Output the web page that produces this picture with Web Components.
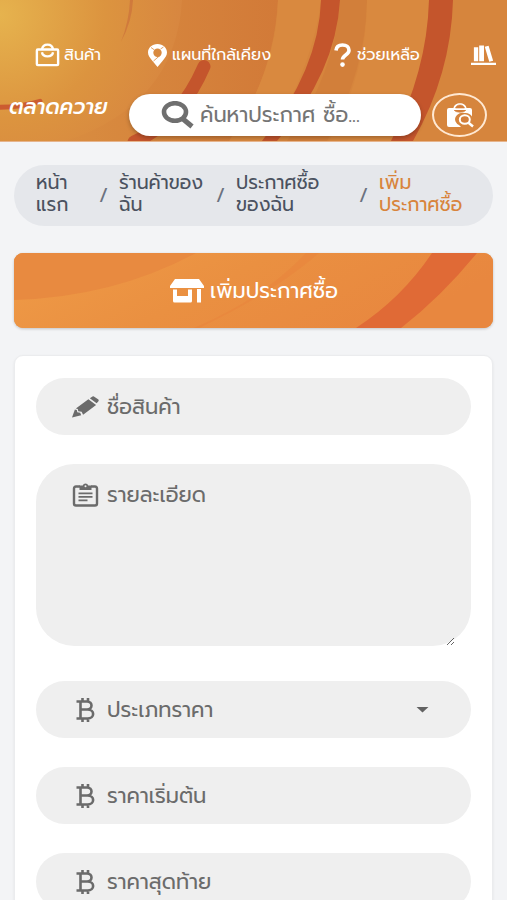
<!DOCTYPE html>
<html lang="th">
<head>
<meta charset="utf-8">
<meta name="viewport" content="width=device-width, initial-scale=1">
<title>เพิ่มประกาศซื้อ</title>
<style>
  html { background: #f3f4f6; }
  body { margin: 0; color: #4b5260; font: 18px/22px "Prompt", "Noto Sans", "Noto Sans Thai", sans-serif; }
  main { display: grid; gap: 27px; padding: 23px 14px; }
</style>
</head>
<body>
<site-header>
  <nav-item slot="nav" icon="bag">สินค้า</nav-item>
  <nav-item slot="nav" icon="pin">แผนที่ใกล้เคียง</nav-item>
  <nav-item slot="nav" icon="help">ช่วยเหลือ</nav-item>
  <nav-item slot="nav" icon="books" label="คลังความรู้"></nav-item>
  <search-box slot="search" placeholder="ค้นหาประกาศ ซื้อ..."></search-box>
</site-header>
<main>
  <crumb-trail>
    <crumb-item>หน้า<br>แรก</crumb-item>
    <crumb-item>ร้านค้าของ<br>ฉัน</crumb-item>
    <crumb-item>ประกาศซื้อ<br>ของฉัน</crumb-item>
    <crumb-item current>เพิ่ม<br>ประกาศซื้อ</crumb-item>
  </crumb-trail>
  <action-banner>เพิ่มประกาศซื้อ</action-banner>
  <form-card>
    <form-field icon="pencil" label="ชื่อสินค้า"></form-field>
    <form-field icon="clipboard" kind="textarea" label="รายละเอียด"></form-field>
    <form-field icon="baht" kind="select" label="ประเภทราคา"></form-field>
    <form-field icon="baht" label="ราคาเริ่มต้น"></form-field>
    <form-field icon="baht" label="ราคาสุดท้าย"></form-field>
  </form-card>
</main>
<script>
const ICONS = {
  bag: ['0 0 26 26', '<g fill="none" stroke="currentColor" stroke-width="2.6" stroke-linejoin="round"><rect x="1.5" y="7" width="23" height="17" rx="1"/><path d="M7 7c1-7 11-7 12 0"/><path d="M7 10c1 6 11 6 12 0"/></g>'],
  pin: ['0 0 20 24', '<path fill="currentColor" fill-rule="evenodd" d="M10 1C4.500 1 .5 4.700.5 9.500c0 3 2 5.500 4.500 8.500l5 6 5-6c2.500-3 4.500-5.500 4.500-8.500C19.500 4.700 15.500 1 10 1zm0 4.500a4.200 4.200 0 1 1 0 8.400 4.200 4.200 0 0 1 0-8.400z"/><path d="M3.500 4.500 7 7M13 12l-7 6M13 6l3-2" stroke="#d98a40" stroke-width=".8"/>'],
  help: ['0 0 18 24', '<path d="M2.500 7.500C2.800 3.500 5.500 2 9 2c4 0 6.500 2 6.500 5.200 0 4.800-6.500 4.600-6.500 9.300" fill="none" stroke="currentColor" stroke-width="3.600"/><circle cx="9" cy="21.600" r="2.300" fill="currentColor"/>'],
  books: ['0 0 26 22', '<path fill="currentColor" d="M0 19h26v2.500H0zM3 3h4.500v14.500H3zM8.500 1h5v16.500h-5zM14.300 2.500l4-1 4.700 15.500-4 1z"/>'],
  search: ['0 0 34 28', '<ellipse cx="14" cy="11" rx="11" ry="8.800" fill="none" stroke="currentColor" stroke-width="4.600"/><path d="m22 18 9 7.500" stroke="currentColor" stroke-width="5"/>'],
  bagsearch: ['0 0 28 26', '<path fill="currentColor" d="M3 6h4.500C8 -.5 20 -.5 20.500 6H24a2 2 0 0 1 2 2v6.500A7.500 6.500 0 0 0 18.500 11a7.500 6.500 0 0 0-5.500 12l2 2H3a2 2 0 0 1-2-2V8a2 2 0 0 1 2-2z"/><path d="M9.500 6c1-4 8-4 9 0zM8 8c2 3 10 3 12 0" fill="#d47f3b" stroke="#d47f3b" stroke-width=".6"/><ellipse cx="18.800" cy="17.500" rx="5" ry="4.300" fill="#d47f3b" stroke="currentColor" stroke-width="2"/><path d="m22.500 20.800 4.500 3.700" stroke="currentColor" stroke-width="2.500"/>'],
  shop: ['0 0 36 24', '<path fill="currentColor" d="M6 0h24l5 7v2H1V7zM4 10.500h4V17h11v-6.500h4V22a1.500 1.500 0 0 1-1.500 1.500h-16A1.500 1.500 0 0 1 4 22zM28 10h4v13.500h-4z"/>'],
  pencil: ['0 0 28 22', '<path fill="currentColor" d="M0 22l3-8.500L5 14l.5 2.500 3 .5 1 2.500zM4 12.500 17 3l8 6L11.500 19l-1.500-3-3.500-.5L6 13zM18.500 2l2-1.500c1-.7 2-.7 3 0L27 3c1 .8 1 1.700 0 2.600L25.500 7z"/>'],
  clipboard: ['0 0 26 24', '<path d="M7.500 3.500h-4Q1.500 3.500 1.500 5.500v15q0 2 2 2h19q2 0 2-2v-15q0-2-2-2h-4" fill="none" stroke="currentColor" stroke-width="2.400"/><path fill="currentColor" d="M7 2.500h3.200a3 3 0 0 1 5.600 0H19V7H7zM6 9.500h14v1.800H6zM6 13h14v1.800H6zM6 16.500h9v1.800H6z"/><circle cx="13" cy="3.300" r="1" fill="#efefef"/>'],
  baht: ['0 0 20 24', '<path d="M1 3.500h10.500c6 0 6 8 0 8H5h7c7.500 0 7.500 9 0 9H1M5 3.500v17M7 0v4M12.500 0v4M7 20v4M12.500 20v4" fill="none" stroke="currentColor" stroke-width="2.600"/>']
};

function define(name, render) {
  customElements.define(name, class extends HTMLElement {
    constructor() { super(); this.attachShadow({ mode: 'open' }); }
    connectedCallback() { this.shadowRoot.innerHTML = render(this); }
  });
}

define('ui-icon', el => {
  const [box, body] = ICONS[el.getAttribute('name')];
  return `<style>:host{display:block;flex:none}svg{display:block;width:100%;height:100%}</style>
  <svg viewBox="${box}" aria-hidden="true">${body}</svg>`;
});

define('nav-item', el => `
<style>
  :host { display: block; }
  a { display: flex; align-items: center; gap: 4px; color: #fff; text-decoration: none; font-size: 16px; line-height: 24px; white-space: nowrap; }
  ui-icon { width: 25px; height: 24px; }
  ui-icon[name=pin], ui-icon[name=help] { width: 21px; }
</style>
<a href="#" ${el.getAttribute('label') ? `aria-label="${el.getAttribute('label')}"` : ''}><ui-icon name="${el.getAttribute('icon')}"></ui-icon><slot></slot></a>`);

define('search-box', el => `
<style>
  :host { display: block; flex: 1; min-width: 0; }
  label { display: flex; align-items: center; gap: 5px; height: 42px; padding: 0 32px; box-sizing: border-box; border-radius: 21px; background: #fff; color: #6f6f6f; box-shadow: 0 2px 4px #0004; }
  ui-icon { width: 34px; height: 28px; }
  input { flex: 1; width: 0; min-width: 0; padding: 0; border: 0; outline: 0; background: none; color: inherit; font: inherit; font-size: 21px; line-height: 32px; }
  input::placeholder { color: #757575; opacity: 1; }
</style>
<label><ui-icon name="search"></ui-icon><input type="text" aria-label="${el.getAttribute('placeholder')}" placeholder="${el.getAttribute('placeholder')}"></label>`);

define('site-header', () => `
<style>
  :host { display: grid; position: relative; overflow: hidden; color: #fff; background: #d6833d; padding: 43px 0 4px; gap: 26px; border-bottom: 1px solid #e6b48c; }
  .art { position: absolute; inset: 0; width: 100%; height: 100%; }
  nav { position: relative; display: flex; gap: 40px; padding-left: 35px; overflow: hidden; }
  ::slotted(nav-item) { flex: 0 0 72px; }
  ::slotted(nav-item:nth-of-type(2)) { flex-basis: 145px; }
  ::slotted(nav-item:nth-of-type(3)) { flex-basis: 99px; }
  .bar { position: relative; display: flex; align-items: center; padding: 0 20px 0 9px; }
  .logo { flex: none; width: 120px; color: #fff; text-decoration: none; font-size: 21px; font-weight: 500; font-style: italic; line-height: 24px; padding-bottom: 16px; white-space: nowrap; }
  button { flex: none; display: grid; place-items: center; width: 55px; height: 44px; margin-left: 11px; padding: 0; border: 2px solid #ffe8d2; border-radius: 50%; background: none; color: #fff; }
  button ui-icon { width: 28px; height: 26px; }
</style>
<svg class="art" viewBox="0 0 507 142" preserveAspectRatio="none" aria-hidden="true">
  <defs>
    <radialGradient id="sun" gradientUnits="userSpaceOnUse" cx="0" cy="15" r="190"><stop stop-color="#e6b34e"/><stop offset=".55" stop-color="#dc943f"/><stop offset="1" stop-color="#d78540"/></radialGradient>
    <linearGradient id="mid" x1="0" x2="1"><stop stop-color="#d98d40"/><stop offset="1" stop-color="#d27a38"/></linearGradient>
  </defs>
  <path fill="#d6853d" d="M0 0h507v142H0z"/>
  <path fill="url(#mid)" d="M180 0h98q-4 76-48 142H60q120-50 120-142z"/>
  <path fill="url(#sun)" d="M0 0h182Q176 105 66 142H0z"/>
  <path fill="#d07a3c" d="M130 0h3q-1 22-12 42 8-20 9-42z"/>
  <path fill="#d9893f" d="M278 0h43q-6 60-52 142h-40Q276 72 278 0z"/>
  <path fill="#d27f3a" d="M340 0h27q-1 70-40 142h-40q48-66 53-142z"/>
  <path fill="#d9893f" d="M367 0h62q-1 80-38 142h-62q38-70 38-142z"/>
  <path fill="#c4552c" d="M321 0h19q-4 73-63 142h-15Q319 70 321 0zM429 0h24q-2 75-40 142h-22q36-70 38-142z"/>
  <path d="M204 67q-24 56-70 76" fill="none" stroke="#c4552c" stroke-width="13" stroke-linecap="round"/>
  <path d="M-2 108q22 0 42-6" fill="none" stroke="#cc5c30" stroke-width="5" stroke-linecap="round"/>
</svg>
<nav aria-label="เมนูหลัก"><slot name="nav"></slot></nav>
<div class="bar"><a class="logo" href="#">ตลาดควาย</a><slot name="search"></slot><button type="button" aria-label="ค้นหาสินค้า"><ui-icon name="bagsearch"></ui-icon></button></div>`);

define('crumb-trail', () => `
<style>
  :host { display: block; }
  nav { display: flex; align-items: center; min-height: 61px; box-sizing: border-box; padding: 6px 28px 6px 22px; border-radius: 31px; background: #e5e7eb; }
</style>
<nav aria-label="เส้นทาง"><slot></slot></nav>`);

define('crumb-item', () => `
<style>
  :host { display: flex; align-items: center; flex: 0 1 117px; font-size: 19px; line-height: 22px; color: #4b5260; white-space: nowrap; }
  :host(:first-child) { flex-basis: 83px; }
  :host(:nth-child(3)) { flex-basis: 143px; }
  :host([current]) { color: #d8843c; flex: 1; }
  a { flex: 1; padding-bottom: 4px; color: inherit; text-decoration: none; }
  i { flex: none; width: 20px; font-style: normal; color: #6b7280; }
  :host([current]) i { display: none; }
</style>
<a href="#"><slot></slot></a><i aria-hidden="true">/</i>`);

define('action-banner', () => `
<style>
  :host { display: block; }
  button { position: relative; display: flex; align-items: center; justify-content: center; gap: 5px; width: 100%; min-height: 75px; padding: 0; border: 0; border-radius: 9px; overflow: hidden; background: #e98f42; color: #fff; font: inherit; font-size: 21px; line-height: 32px; box-shadow: 0 1px 3px #0003; }
  .art { position: absolute; inset: 0; width: 100%; height: 100%; }
  ui-icon { position: relative; width: 36px; height: 24px; }
  span { position: relative; }
</style>
<button type="button">
  <svg class="art" viewBox="0 0 479 75" preserveAspectRatio="none" aria-hidden="true">
    <defs><linearGradient id="g" x1="0" x2="1" y2=".3"><stop stop-color="#ef9b47"/><stop offset=".5" stop-color="#ea9041"/><stop offset="1" stop-color="#e8873f"/></linearGradient></defs>
    <path fill="url(#g)" d="M0 0h479v75H0z"/>
    <path fill="#e88a40" d="M0 0h182Q100 44 0 47z"/>
    <path fill="#e8873d" d="M292 0h13q-46 40-120 75h-5q70-30 112-75z" opacity=".8"/>
    <path fill="#e06a36" d="M418 0h45q-36 44-76 75h-45q46-30 76-75z"/>
  </svg>
  <ui-icon name="shop"></ui-icon><span><slot></slot></span>
</button>`);

define('form-card', () => `
<style>
  :host { display: block; }
  form { display: grid; gap: 29px; padding: 22px 21px; border: 1px solid #ebecee; border-radius: 9px; background: #fff; box-shadow: 0 1px 3px #0001; }
</style>
<form><slot></slot></form>`);

define('form-field', el => {
  const label = el.getAttribute('label'), kind = el.getAttribute('kind');
  const control = kind === 'textarea' ? `<textarea id="c" aria-label="${label}" placeholder="${label}"></textarea>`
    : kind === 'select' ? `<select id="c" aria-label="${label}"><option>${label}</option></select>`
    : `<input id="c" type="text" aria-label="${label}" placeholder="${label}">`;
  return `
<style>
  :host { display: block; color: #6b6b6b; }
  :host([kind=textarea]) { padding-bottom: 6px; }
  .box { display: flex; align-items: center; gap: 8px; height: 57px; box-sizing: border-box; padding: 0 19px 0 36px; border-radius: 32px; background: #efefef; }
  :host([kind=textarea]) .box { height: 182px; align-items: flex-start; border-radius: 38px; padding-top: 19px; padding-right: 16px; }
  ui-icon { width: 27px; height: 24px; }
  #c { flex: 1; width: 0; min-width: 0; box-sizing: border-box; padding: 0; border: 0; outline: 0; background: transparent; color: #6b6b6b; font: inherit; font-size: 21px; line-height: 24px; }
  #c::placeholder { color: #6b6b6b; opacity: 1; }
  input#c, select#c { height: 40px; }
  textarea { height: 163px; resize: vertical; overflow: hidden; }
  select { appearance: none; }
  .arrow { flex: none; width: 13px; height: 6px; margin-right: 23px; background: #626262; clip-path: polygon(0 0, 100% 0, 50% 100%); }
  :host([icon=pencil]) ui-icon { height: 22px; }
</style>
<div class="box"><ui-icon name="${el.getAttribute('icon')}"></ui-icon>${control}${kind === 'select' ? '<span class="arrow"></span>' : ''}</div>`;
});
</script>
</body>
</html>
